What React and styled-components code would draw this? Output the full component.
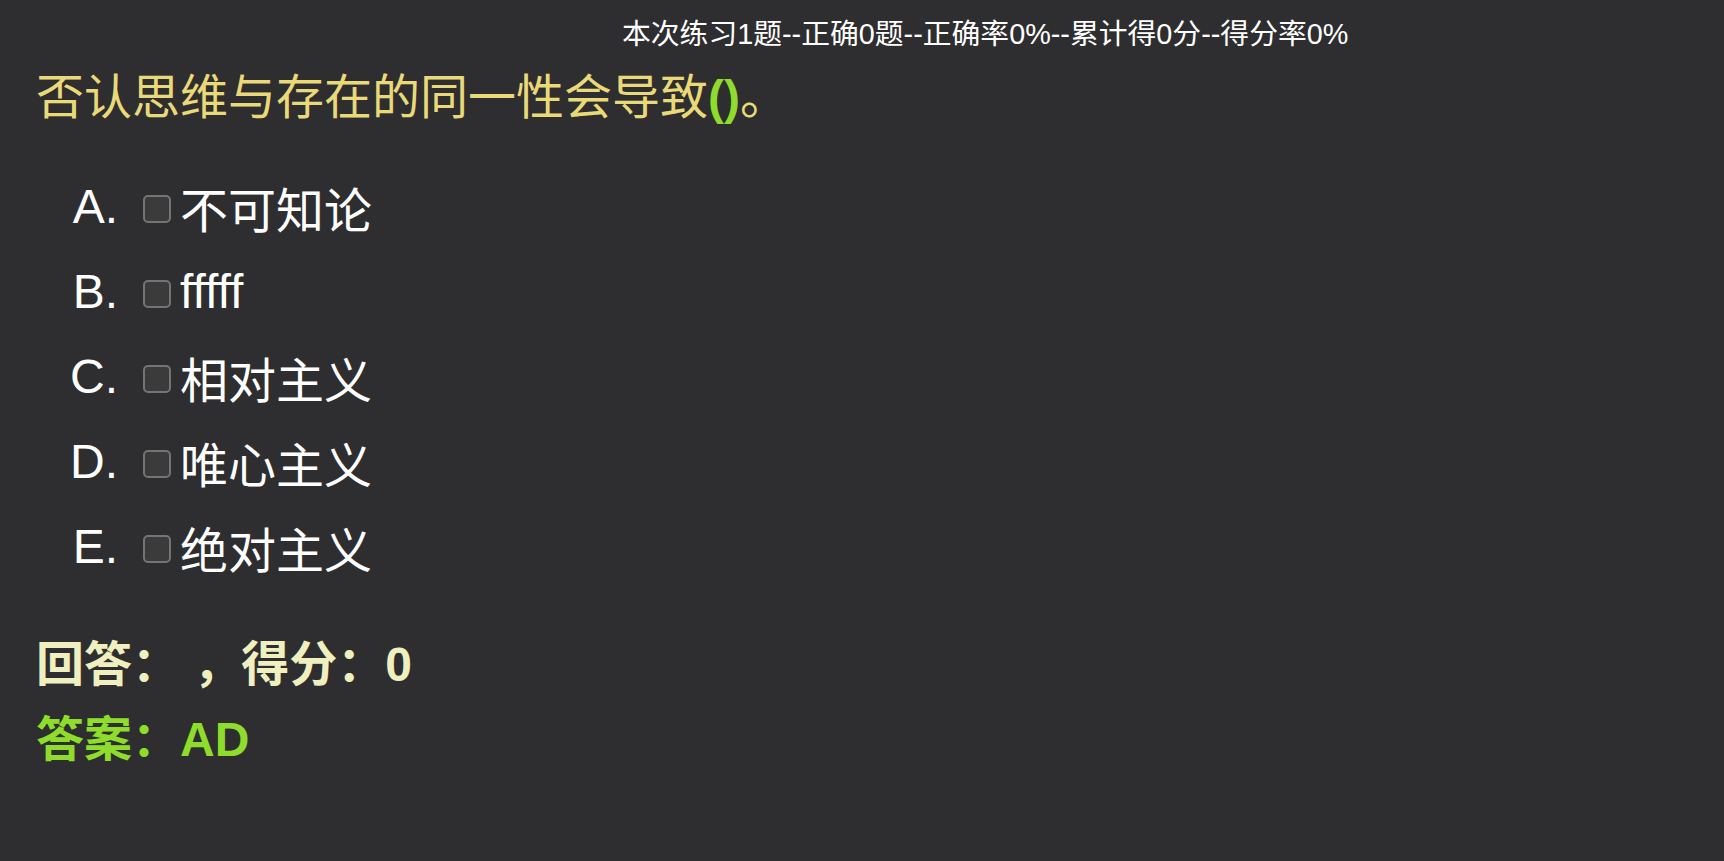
import React from "react";
import styled, { createGlobalStyle } from "styled-components";

const Global = createGlobalStyle`
  html, body {
    margin: 0;
    padding: 0;
    background: #2e2e30;
  }
  body {
    font-family: "Liberation Sans", "Noto Sans CJK SC", sans-serif;
    color: #ffffff;
  }
`;

const Page = styled.div`
  min-height: 861px;
  background: #2e2e30;
  display: flex;
  flex-direction: column;
  padding: 17px 0 0 36px;
  box-sizing: border-box;
`;

const Stats = styled.div`
  padding-left: 586px;
  font-size: 28.8px;
  line-height: 34px;
  height: 34px;
  color: #ffffff;
  white-space: nowrap;
`;

const Question = styled.div`
  margin-top: 19px;
  font-size: 48px;
  line-height: 56px;
  color: #ead978;
  white-space: nowrap;
`;

const Paren = styled.span`
  color: #8edc2b;
  font-weight: bold;
`;

const Options = styled.ol`
  list-style: none;
  margin: 38px 0 0 0;
  padding: 0;
  display: flex;
  flex-direction: column;
`;

const Option = styled.li`
  display: grid;
  grid-template-columns: 107px 37px auto;
  align-items: center;
  height: 85px;
  font-size: 48px;
  color: #ffffff;
`;

const Letter = styled.span`
  text-align: right;
  padding-right: 25px;
`;

const Box = styled.span`
  width: 24px;
  height: 24px;
  border: 2px solid #747474;
  border-radius: 5px;
  background: #3b3b3b;
  box-sizing: content-box;
  justify-self: start;
  position: relative;
  top: 2px;
`;

const Text = styled.span`
  white-space: nowrap;
`;

const Results = styled.div`
  margin-top: 38px;
  display: flex;
  flex-direction: column;
`;

const Result = styled.div`
  font-size: 48px;
  line-height: 75px;
  font-weight: bold;
  color: ${(p) => p.$color};
  white-space: pre;
`;

const options = [
  ["A.", "不可知论"],
  ["B.", "fffff"],
  ["C.", "相对主义"],
  ["D.", "唯心主义"],
  ["E.", "绝对主义"],
];

export default function App() {
  return (
    <>
      <Global />
      <Page>
        <Stats>本次练习1题--正确0题--正确率0%--累计得0分--得分率0%</Stats>
        <Question>
          否认思维与存在的同一性会导致<Paren>()</Paren>。
        </Question>
        <Options>
          {options.map(([l, t]) => (
            <Option key={l}>
              <Letter>{l}</Letter>
              <Box />
              <Text>{t}</Text>
            </Option>
          ))}
        </Options>
        <Results>
          <Result $color="#efefbf">{"回答： ，得分：0"}</Result>
          <Result $color="#8edc2b">答案：AD</Result>
        </Results>
      </Page>
    </>
  );
}
